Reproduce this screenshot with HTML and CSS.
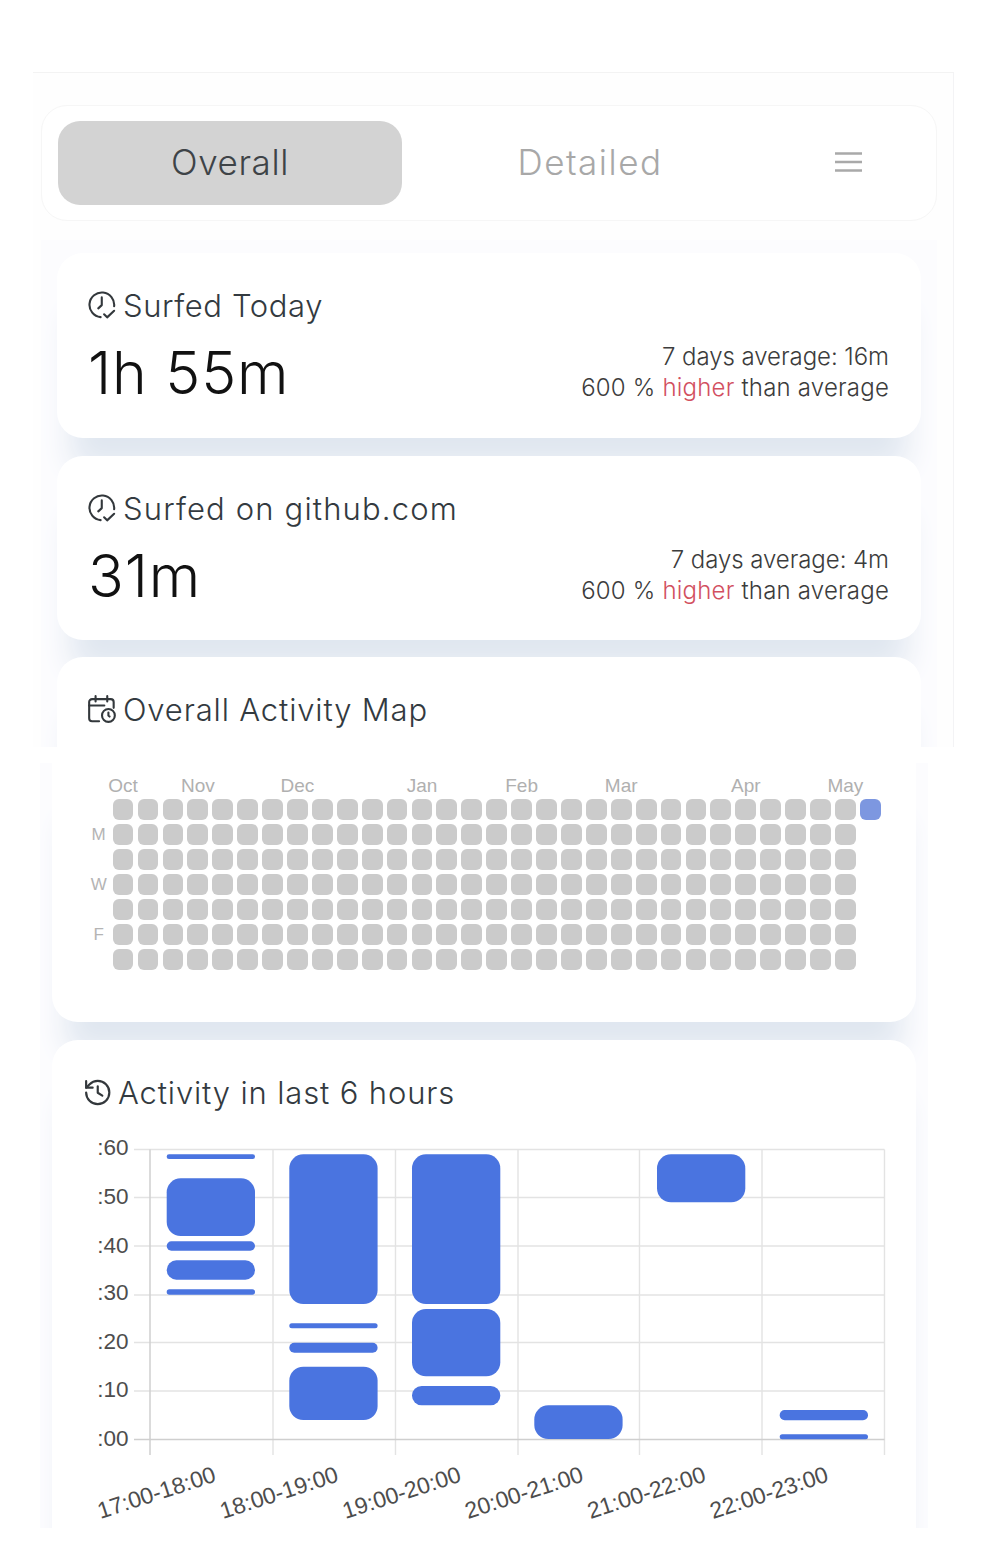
FILE: index.html
```html
<!DOCTYPE html>
<html lang="en">
<head>
<meta charset="utf-8">
<title>Activity</title>
<link rel="stylesheet" href="styles.css">
</head>
<body>
<section class="slice-top">
  <nav class="tabs">
    <div class="tab tab-active">Overall</div>
    <div class="tab">Detailed</div>
    <svg class="menu" viewBox="0 0 27 20" aria-hidden="true"><path d="M0 1.5h27M0 10h27M0 18.5h27"/></svg>
  </nav>
  <div class="stats">
    <article class="card stat stat-first">
      <h2 class="title"><svg class="icon" viewBox="0 0 24 24" aria-hidden="true"><path d="M10.8 22.4A10.6 10.6 0 1 1 22.4 13"/><path d="M11.8 5.5v6.6l-3 2.8"/><path d="M13.8 20l2.6 2.6 6-5.6"/></svg>Surfed Today</h2>
      <div class="stat-row">
        <div class="value">1h 55m</div>
        <div class="note">
          <div class="note-avg">7 days average: 16m</div>
          <div>600 % <span class="higher">higher</span> than average</div>
        </div>
      </div>
    </article>
    <article class="card stat stat-second">
      <h2 class="title"><svg class="icon" viewBox="0 0 24 24" aria-hidden="true"><path d="M10.8 22.4A10.6 10.6 0 1 1 22.4 13"/><path d="M11.8 5.5v6.6l-3 2.8"/><path d="M13.8 20l2.6 2.6 6-5.6"/></svg>Surfed on github.com</h2>
      <div class="stat-row">
        <div class="value">31m</div>
        <div class="note">
          <div class="note-avg">7 days average: 4m</div>
          <div>600 % <span class="higher">higher</span> than average</div>
        </div>
      </div>
    </article>
    <article class="card stat stat-map">
      <h2 class="title"><svg class="icon" viewBox="0 0 24 24" aria-hidden="true"><path d="M9.5 22.5H3.5a2.5 2.5 0 0 1-2.5-2.5V6a2.5 2.5 0 0 1 2.5-2.5h16A2.5 2.5 0 0 1 22 6v5"/><path d="M6.5 1v4.5M16.5 1v4.5M1 9h13"/><circle cx="17.5" cy="17.5" r="5.5"/><path d="M17.5 15v2.5l1 1"/></svg>Overall Activity Map</h2>
    </article>
  </div>
</section>

<section class="slice-bottom">
  <article class="card heat">
    <div class="months">
      <span class="m1">Oct</span><span class="m4">Nov</span><span class="m8">Dec</span><span class="m13">Jan</span><span class="m17">Feb</span><span class="m21">Mar</span><span class="m26">Apr</span><span class="m30">May</span>
    </div>
    <div class="heat-body">
      <div class="days"><span class="d2">M</span><span class="d4">W</span><span class="d6">F</span></div>
      <div class="cells">
        <i></i><i></i><i></i><i></i><i></i><i></i><i></i>
        <i></i><i></i><i></i><i></i><i></i><i></i><i></i>
        <i></i><i></i><i></i><i></i><i></i><i></i><i></i>
        <i></i><i></i><i></i><i></i><i></i><i></i><i></i>
        <i></i><i></i><i></i><i></i><i></i><i></i><i></i>
        <i></i><i></i><i></i><i></i><i></i><i></i><i></i>
        <i></i><i></i><i></i><i></i><i></i><i></i><i></i>
        <i></i><i></i><i></i><i></i><i></i><i></i><i></i>
        <i></i><i></i><i></i><i></i><i></i><i></i><i></i>
        <i></i><i></i><i></i><i></i><i></i><i></i><i></i>
        <i></i><i></i><i></i><i></i><i></i><i></i><i></i>
        <i></i><i></i><i></i><i></i><i></i><i></i><i></i>
        <i></i><i></i><i></i><i></i><i></i><i></i><i></i>
        <i></i><i></i><i></i><i></i><i></i><i></i><i></i>
        <i></i><i></i><i></i><i></i><i></i><i></i><i></i>
        <i></i><i></i><i></i><i></i><i></i><i></i><i></i>
        <i></i><i></i><i></i><i></i><i></i><i></i><i></i>
        <i></i><i></i><i></i><i></i><i></i><i></i><i></i>
        <i></i><i></i><i></i><i></i><i></i><i></i><i></i>
        <i></i><i></i><i></i><i></i><i></i><i></i><i></i>
        <i></i><i></i><i></i><i></i><i></i><i></i><i></i>
        <i></i><i></i><i></i><i></i><i></i><i></i><i></i>
        <i></i><i></i><i></i><i></i><i></i><i></i><i></i>
        <i></i><i></i><i></i><i></i><i></i><i></i><i></i>
        <i></i><i></i><i></i><i></i><i></i><i></i><i></i>
        <i></i><i></i><i></i><i></i><i></i><i></i><i></i>
        <i></i><i></i><i></i><i></i><i></i><i></i><i></i>
        <i></i><i></i><i></i><i></i><i></i><i></i><i></i>
        <i></i><i></i><i></i><i></i><i></i><i></i><i></i>
        <i></i><i></i><i></i><i></i><i></i><i></i><i></i>
        <i class="today"></i>
      </div>
    </div>
  </article>
  <article class="card chart-card">
    <h2 class="title title-chart"><svg class="icon icon-history" viewBox="0 0 24 24" aria-hidden="true"><path d="M2.6 12a9.6 9.6 0 1 0 9.6-9.6 10 10 0 0 0-6.9 2.9L2.6 8"/><path d="M2.6 2.6V8H8"/><path d="M12.2 6.8v5.4l3.8 2.4"/></svg>Activity in last 6 hours</h2>
    <svg class="chart" viewBox="52 1130 864 398" role="img" aria-label="Activity per hour">
      <g class="grid">
        <path d="M134 1149.5H884.5M134 1197.5H884.5M134 1246H884.5M134 1295H884.5M134 1342.5H884.5M134 1391H884.5"/>
        <path d="M273 1149.5V1455M395.5 1149.5V1455M518 1149.5V1455M639.5 1149.5V1455M762 1149.5V1455M884.5 1149.5V1455"/>
      </g>
      <g class="axis"><path d="M134 1439.5H884.5M150 1149.5V1455"/></g>
      <g class="bars">
        <rect x="166.7" y="1154.3" width="88.3" height="4.7" rx="2.3"/>
        <rect x="166.7" y="1178.3" width="88.3" height="57.7" rx="14"/>
        <rect x="166.7" y="1241.3" width="88.3" height="9.4" rx="4.7"/>
        <rect x="166.7" y="1260.3" width="88.3" height="19.4" rx="9.7"/>
        <rect x="166.7" y="1289.3" width="88.3" height="5.4" rx="2.7"/>
        <rect x="289.3" y="1154.3" width="88.3" height="149.7" rx="14"/>
        <rect x="289.3" y="1323.3" width="88.3" height="5" rx="2.5"/>
        <rect x="289.3" y="1342.7" width="88.3" height="10" rx="5"/>
        <rect x="289.3" y="1366.7" width="88.3" height="53.3" rx="14"/>
        <rect x="412" y="1154.3" width="88.3" height="149.7" rx="14"/>
        <rect x="412" y="1309" width="88.3" height="67.3" rx="14"/>
        <rect x="412" y="1386" width="88.3" height="19.3" rx="9.6"/>
        <rect x="534.3" y="1405.3" width="88.3" height="33.7" rx="14"/>
        <rect x="657" y="1154.3" width="88.3" height="48" rx="14"/>
        <rect x="779.7" y="1410" width="88.3" height="10.3" rx="5"/>
        <rect x="779.7" y="1434.3" width="88.3" height="5" rx="2.5"/>
      </g>
      <g class="ylabels">
        <text x="128.5" y="1155">:60</text>
        <text x="128.5" y="1203.5">:50</text>
        <text x="128.5" y="1252.5">:40</text>
        <text x="128.5" y="1300">:30</text>
        <text x="128.5" y="1348.5">:20</text>
        <text x="128.5" y="1397">:10</text>
        <text x="128.5" y="1445.5">:00</text>
      </g>
      <g class="xlabels">
        <text transform="translate(100.5 1519) rotate(-18)">17:00-18:00</text>
        <text transform="translate(223 1519) rotate(-18)">18:00-19:00</text>
        <text transform="translate(345.6 1519) rotate(-18)">19:00-20:00</text>
        <text transform="translate(468 1519) rotate(-18)">20:00-21:00</text>
        <text transform="translate(590.4 1519) rotate(-18)">21:00-22:00</text>
        <text transform="translate(713 1519) rotate(-18)">22:00-23:00</text>
      </g>
    </svg>
  </article>
</section>
</body>
</html>
```
FILE: styles.css
```css
* { box-sizing: border-box; }

html, body { margin: 0; padding: 0; background: #fff; }

body {
  padding-top: 72px;
  font-family: Inter, "Noto Sans", sans-serif;
  color: #333;
}

.slice-top {
  width: 921px;
  height: 675px;
  margin-left: 33px;
  padding: 32px 16px 0 8px;
  overflow: hidden;
  border-top: 1px solid #f3f3f3;
  border-right: 1px solid #f3f3f5;
  background: #fefefe;
}

.tabs {
  display: flex;
  align-items: center;
  gap: 16px;
  height: 116px;
  padding: 0 16px;
  border: 1px solid #f6f6f6;
  border-radius: 26px;
  background: #fff;
  margin-bottom: 19px;
}

.tab {
  width: 344px;
  height: 84px;
  padding-bottom: 2px;
  border-radius: 22px;
  display: flex;
  align-items: center;
  justify-content: center;
  font-size: 35px;
  font-weight: 300;
  letter-spacing: 1.5px;
  color: #a8a8a8;
}

.tab-active { background: #d3d3d3; color: #3e4347; letter-spacing: 0.6px; }

.menu {
  width: 27px;
  height: 20px;
  margin-left: auto;
  margin-right: 58px;
  margin-bottom: 3px;
  fill: none;
  stroke: #a9a9a9;
  stroke-width: 2.6;
}

.stats {
  height: 520px;
  padding: 13px 16px 0;
  overflow: hidden;
  background: #fcfcfe;
}

.card {
  background: #fff;
  border-radius: 26px;
  box-shadow: 0 44px 30px -14px #e0e7f0;
}

.stat {
  width: 864px;
  padding: 36px 32px 0 31px;
}

.stat-first { height: 185px; margin-bottom: 18px; }
.stat-second { height: 184px; margin-bottom: 17px; }
.stat-map { height: 300px; }

.title {
  display: flex;
  align-items: center;
  gap: 7px;
  height: 32px;
  margin: 0;
  font-family: Inter, "Noto Sans", sans-serif;
  font-size: 31px;
  font-weight: 300;
  letter-spacing: 0.85px;
  color: #333a40;
}

.stat-first .title { letter-spacing: 0.6px; }
.stat-second .title { letter-spacing: 1.15px; }

.icon {
  width: 28px;
  height: 28px;
  flex: none;
  fill: none;
  stroke: #33383c;
  stroke-width: 1.8;
  stroke-linecap: round;
  stroke-linejoin: round;
}

.icon-history { width: 29px; height: 29px; }

.stat-row {
  display: flex;
  justify-content: space-between;
  align-items: center;
  margin-top: 17px;
}

.value {
  font-size: 59px;
  font-weight: 300;
  line-height: 70px;
  letter-spacing: 0.9px;
  color: #111;
}

.note {
  margin-bottom: 2px;
  text-align: right;
  font-size: 24px;
  line-height: 31px;
  font-weight: 300;
  letter-spacing: 0.2px;
  color: #3c3c3c;
}

.note-avg { letter-spacing: -0.05px; }

.higher { color: #d2505f; }

.slice-bottom {
  width: 888px;
  height: 765px;
  margin-top: 16px;
  margin-left: 40px;
  padding: 0 12px;
  overflow: hidden;
  background: #fcfcfe;
  font-family: "Liberation Sans", Arial, sans-serif;
}

.heat {
  width: 864px;
  height: 259px;
  margin-bottom: 18px;
  padding: 9px 0 0 60.7px;
  border-radius: 0 0 26px 26px;
}

.months {
  display: grid;
  grid-template-columns: repeat(31, 20.8px);
  column-gap: 4.12px;
  height: 27.3px;
  font-size: 19px;
  line-height: 27px;
  color: #b0b0b0;
}

.months span { justify-self: center; white-space: nowrap; }
.m1 { grid-column: 1; }
.m4 { grid-column: 4; }
.m8 { grid-column: 8; }
.m13 { grid-column: 13; }
.m17 { grid-column: 17; }
.m21 { grid-column: 21; }
.m26 { grid-column: 26; }
.m30 { grid-column: 30; }

.heat-body { position: relative; }

.days {
  position: absolute;
  left: -28px;
  top: 0.5px;
  width: 28px;
  display: grid;
  grid-template-rows: repeat(7, 20.8px);
  row-gap: 4.2px;
  font-size: 17px;
  line-height: 20.8px;
  text-align: center;
  color: #b4b4b4;
}

.d2 { grid-row: 2; }
.d4 { grid-row: 4; }
.d6 { grid-row: 6; }

.cells {
  display: grid;
  grid-auto-flow: column;
  grid-template-rows: repeat(7, 20.8px);
  grid-auto-columns: 20.8px;
  column-gap: 4.12px;
  row-gap: 4.2px;
}

.cells i { display: block; border-radius: 6px; background: #cbcbcb; }
.cells .today { background: #7d97e0; }

.chart-card {
  width: 864px;
  height: 540px;
  padding-top: 36px;
}

.title-chart { padding-left: 31px; gap: 6px; }

.chart {
  display: block;
  width: 864px;
  height: 398px;
  margin-top: 22px;
}

.grid path { fill: none; stroke: #e3e3e3; stroke-width: 1.4; }
.axis path { fill: none; stroke: #cfcfcf; stroke-width: 1.5; }
.bars rect { fill: #4a74e0; }
.ylabels text { font-size: 22.5px; fill: #4d4d4d; text-anchor: end; }
.xlabels text { font-size: 23px; fill: #4d4d4d; }
```
